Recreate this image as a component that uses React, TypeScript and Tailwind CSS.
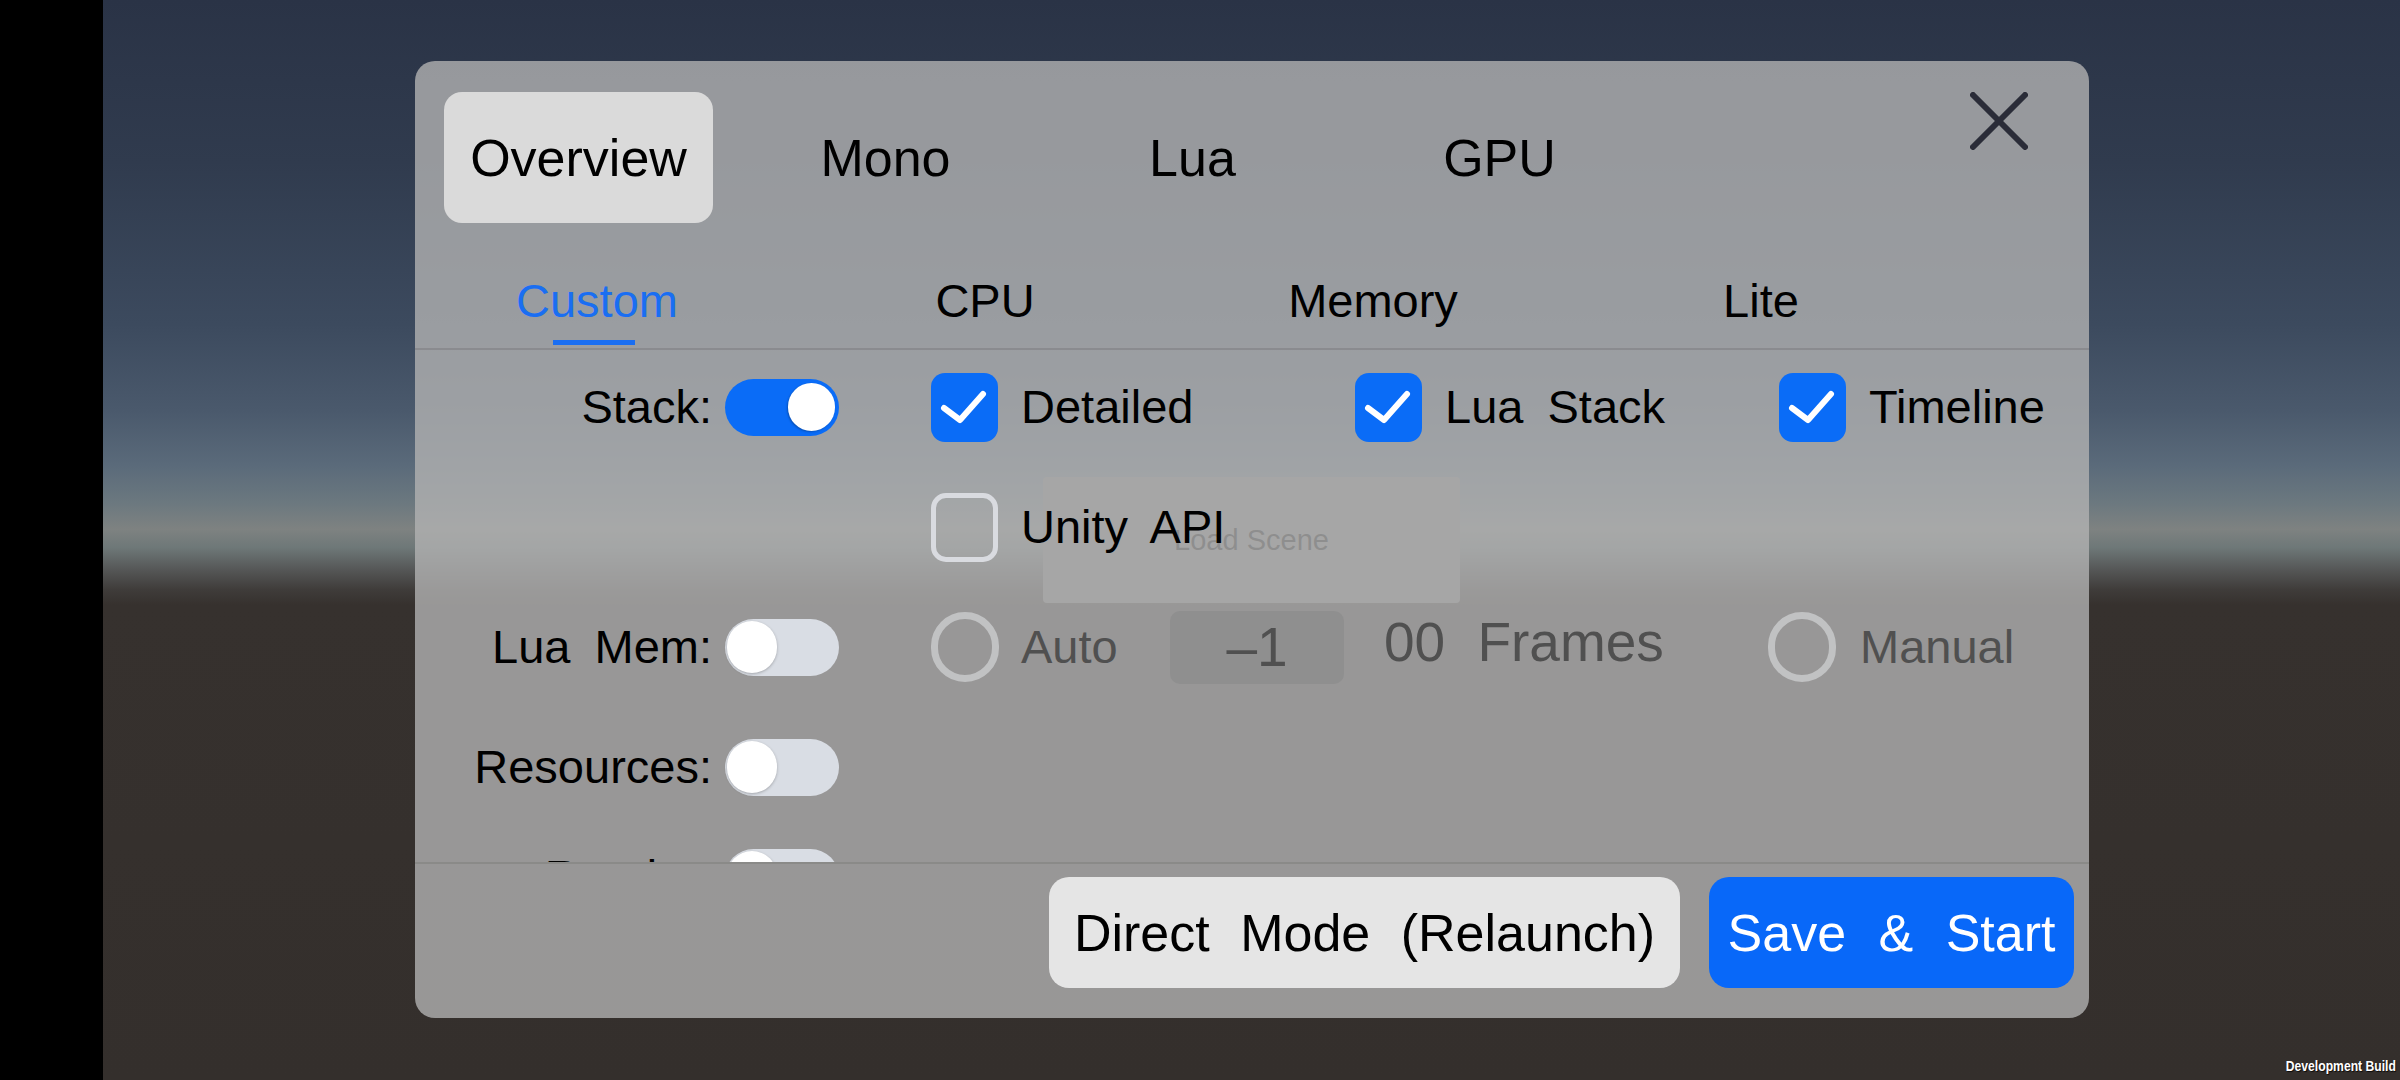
import React from "react";

function CheckOn() {
  return (
    <div className="w-[67px] h-[69px] rounded-[14px] bg-[#0a6cf7] shrink-0 flex items-center justify-center">
      <svg width="67" height="69" viewBox="0 0 67 69">
        <polyline
          points="13,35 29,47 52,21"
          fill="none"
          stroke="#ffffff"
          strokeWidth="6"
          strokeLinecap="round"
          strokeLinejoin="round"
        />
      </svg>
    </div>
  );
}

function CheckOff() {
  return <div className="w-[67px] h-[69px] rounded-[15px] border-[5px] border-[#d9dbe0] shrink-0" />;
}

function Radio() {
  return <div className="w-[68px] h-[70px] rounded-full border-[7px] border-[#c1c2c3] shrink-0" />;
}

function Toggle({ on }: { on: boolean }) {
  if (on) {
    return (
      <div className="w-[114px] h-[57px] rounded-full bg-[#0a6cf7] flex items-center justify-end pr-[4px] shrink-0">
        <div className="w-[47px] h-[48px] rounded-full bg-white shadow-[-1px_1px_2px_rgba(0,0,0,0.25)]" />
      </div>
    );
  }
  return (
    <div className="w-[114px] h-[57px] rounded-full bg-[#d9dde4] flex items-center justify-start pl-[2px] shrink-0">
      <div className="w-[50px] h-[52px] rounded-full bg-white shadow-[0_1px_3px_rgba(0,0,0,0.25)]" />
    </div>
  );
}

function LeftPart({ label, on }: { label?: string; on?: boolean }) {
  if (!label) return <div className="w-[424px] shrink-0" />;
  return (
    <div className="w-[424px] shrink-0 flex items-center">
      <div className="w-[297px] text-right text-[47px] leading-[54px] text-black whitespace-nowrap [word-spacing:11px]">
        {label}
      </div>
      <div className="ml-[13px]">
        <Toggle on={!!on} />
      </div>
    </div>
  );
}

function CheckItem({ label, checked }: { label: string; checked: boolean }) {
  return (
    <div className="w-[424px] shrink-0 flex items-center">
      {checked ? <CheckOn /> : <CheckOff />}
      <span className="ml-[23px] text-[47px] leading-[54px] text-black whitespace-nowrap [word-spacing:11px]">
        {label}
      </span>
    </div>
  );
}

export default function App() {
  return (
    <div className="w-[2400px] h-[1080px] flex overflow-hidden font-['Liberation_Sans',Arial,Helvetica,sans-serif]">
      <div className="w-[103px] h-full bg-black shrink-0" />
      <div className="relative flex-1 h-full bg-[linear-gradient(180deg,#2a3346_0%,#303b4e_15%,#3c4a5e_30%,#4a596c_38%,#5a6a7a_43%,#6b787f_46.5%,#7e8281_49%,#6e7878_50.7%,#575959_52.6%,#3f3c3a_54.6%,#36312e_56%,#342f2c_100%)]">
        {/* scene button behind the dialog */}
        <div className="absolute left-[940px] top-[477px] w-[417px] h-[126px] rounded-[4px] bg-[#7a7a7a] flex items-center justify-center">
          <span className="text-[29px] leading-[34px] text-black">Load Scene</span>
        </div>

        {/* dialog */}
        <div className="absolute left-[312px] top-[61px] w-[1674px] h-[957px] rounded-[20px] bg-[rgba(177,177,177,0.8)] overflow-hidden flex flex-col">
          {/* top tabs */}
          <div className="flex items-start pl-[10px] pt-[31px] shrink-0">
            <div className="w-[307px] h-[131px] flex items-center justify-center">
              <div className="w-[269px] h-[131px] rounded-[18px] bg-[#dadada] flex items-center justify-center">
                <span className="text-[52px] leading-[60px] text-black">Overview</span>
              </div>
            </div>
            <div className="w-[307px] h-[131px] flex items-center justify-center">
              <span className="text-[52px] leading-[60px] text-black">Mono</span>
            </div>
            <div className="w-[307px] h-[131px] flex items-center justify-center">
              <span className="text-[52px] leading-[60px] text-black">Lua</span>
            </div>
            <div className="w-[307px] h-[131px] flex items-center justify-center">
              <span className="text-[52px] leading-[60px] text-black">GPU</span>
            </div>
            <div className="ml-auto mr-[61px] w-[58px] h-[58px]">
              <svg width="58" height="58" viewBox="0 0 58 58">
                <line x1="3" y1="3" x2="55" y2="55" stroke="#2a2c38" strokeWidth="6" strokeLinecap="round" />
                <line x1="55" y1="3" x2="3" y2="55" stroke="#2a2c38" strokeWidth="6" strokeLinecap="round" />
              </svg>
            </div>
          </div>

          {/* sub tabs */}
          <div className="flex h-[125px] -ml-[12px] shrink-0">
            <div className="w-[388px] flex flex-col items-center pt-[51px]">
              <span className="text-[47px] leading-[54px] text-[#1a6ef2]">Custom</span>
              <div className="mt-[12px] w-[82px] h-[5px] bg-[#1a6ef2] -translate-x-[3px]" />
            </div>
            <div className="w-[388px] flex flex-col items-center pt-[51px]">
              <span className="text-[47px] leading-[54px] text-black">CPU</span>
            </div>
            <div className="w-[388px] flex flex-col items-center pt-[51px]">
              <span className="text-[47px] leading-[54px] text-black">Memory</span>
            </div>
            <div className="w-[388px] flex flex-col items-center pt-[51px]">
              <span className="text-[47px] leading-[54px] text-black">Lite</span>
            </div>
          </div>
          <div className="h-[2px] bg-[#8a8b8f] shrink-0" />

          {/* body */}
          <div className="h-[512px] overflow-hidden flex flex-col gap-[8px] pt-[1px] shrink-0">
            <div className="h-[112px] flex items-center shrink-0">
              <LeftPart label="Stack:" on />
              <div className="ml-[92px] flex items-center">
                <CheckItem label="Detailed" checked />
                <CheckItem label="Lua Stack" checked />
                <CheckItem label="Timeline" checked />
              </div>
            </div>
            <div className="h-[112px] flex items-center shrink-0">
              <LeftPart />
              <div className="ml-[92px] flex items-center">
                <CheckItem label="Unity API" checked={false} />
              </div>
            </div>
            <div className="h-[112px] flex items-center shrink-0">
              <LeftPart label="Lua Mem:" on={false} />
              <div className="ml-[92px] flex items-center">
                <Radio />
                <div className="ml-[22px] w-[149px] text-[47px] leading-[54px] text-[#505050]">Auto</div>
                <div className="w-[174px] h-[73px] rounded-[10px] bg-[#8f8f8f] flex items-center justify-center">
                  <span className="text-[55px] leading-[63px] text-[#505050]">–1</span>
                </div>
                <div className="ml-[40px] w-[384px] mb-[10px] text-[55px] leading-[63px] text-[#505050] whitespace-nowrap [word-spacing:17px]">
                  00 Frames
                </div>
                <Radio />
                <span className="ml-[24px] text-[47px] leading-[54px] text-[#505050]">Manual</span>
              </div>
            </div>
            <div className="h-[112px] flex items-center shrink-0">
              <LeftPart label="Resources:" on={false} />
            </div>
            <div className="h-[112px] -mt-[10px] flex items-center shrink-0">
              <LeftPart label="Render:" on={false} />
            </div>
          </div>
          <div className="h-[2px] bg-[#8a8a88] shrink-0" />

          {/* footer */}
          <div className="flex justify-end items-start gap-[29px] pt-[13px] pr-[15px] shrink-0">
            <div className="w-[631px] h-[111px] rounded-[20px] bg-[#e5e5e5] flex items-center justify-center">
              <span className="text-[52px] leading-[60px] text-black whitespace-nowrap [word-spacing:16px]">
                Direct Mode (Relaunch)
              </span>
            </div>
            <div className="w-[365px] h-[111px] rounded-[20px] bg-[#0868f9] flex items-center justify-center">
              <span className="text-[52px] leading-[60px] text-white whitespace-nowrap [word-spacing:18px]">
                Save &amp; Start
              </span>
            </div>
          </div>
        </div>

        <div className="absolute right-[4px] bottom-[6px] text-white text-[15px] font-bold leading-[17px] scale-x-[0.81] origin-right whitespace-nowrap [text-shadow:1px_1px_1px_rgba(0,0,0,0.8)]">
          Development Build
        </div>
      </div>
    </div>
  );
}
